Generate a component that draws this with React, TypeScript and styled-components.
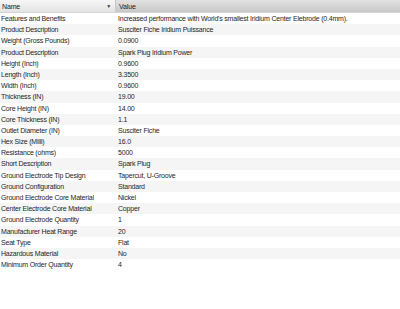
import React from 'react';
import styled, { createGlobalStyle } from 'styled-components';

const rows: [string, string][] = [
  ['Features and Benefits', "Increased performance with World's smallest Iridium Center Elebrode (0.4mm)."],
  ['Product Description', 'Susciter Fiche Iridium Puissance'],
  ['Weight (Gross Pounds)', '0.0900'],
  ['Product Description', 'Spark Plug Iridium Power'],
  ['Height (Inch)', '0.9600'],
  ['Length (Inch)', '3.3500'],
  ['Width (Inch)', '0.9600'],
  ['Thickness (IN)', '19.00'],
  ['Core Height (IN)', '14.00'],
  ['Core Thickness (IN)', '1.1'],
  ['Outlet Diameter (IN)', 'Susciter Fiche'],
  ['Hex Size (Milli)', '16.0'],
  ['Resistance (ohms)', '5000'],
  ['Short Description', 'Spark Plug'],
  ['Ground Electrode Tip Design', 'Tapercut, U-Groove'],
  ['Ground Configuration', 'Standard'],
  ['Ground Electrode Core Material', 'Nickel'],
  ['Center Electrode Core Material', 'Copper'],
  ['Ground Electrode Quantity', '1'],
  ['Manufacturer Heat Range', '20'],
  ['Seat Type', 'Flat'],
  ['Hazardous Material', 'No'],
  ['Minimum Order Quantity', '4'],
];

const Global = createGlobalStyle`
  html, body { margin: 0; padding: 0; background: #fff; }
  body { font-family: "Liberation Sans", Arial, sans-serif; }
`;

// property grid: name column + value column
const Grid = styled.div`
  width: 400px;
  display: grid;
  grid-template-columns: 116px 1fr;
`;

const HeadCell = styled.div<{ $sorted?: boolean }>`
  height: 13px;
  box-sizing: border-box;
  display: flex;
  align-items: center;
  padding: 0 2px 0 ${(p) => (p.$sorted ? 3 : 2)}px;
  font-size: 7px;
  letter-spacing: -0.15px;
  color: #1a1a1a;
  border-bottom: 1px solid #d6d6d6;
  border-right: ${(p) => (p.$sorted ? 'none' : '1px solid #c8c8c8')};
  background: ${(p) =>
    p.$sorted
      ? 'linear-gradient(#e2e2e2, #c8c8c8)'
      : 'linear-gradient(#f7f7f7, #e3e3e3)'};
`;

const Label = styled.span`
  flex: 1;
`;

const Arrow = styled.span`
  font-size: 5px;
  color: #333;
  margin-right: 2px;
`;

const Cell = styled.div<{ $alt: boolean; $value?: boolean }>`
  height: 11.2px;
  line-height: 11.2px;
  padding: 0 2px 0 ${(p) => (p.$value ? 2 : 1)}px;
  font-size: 7px;
  letter-spacing: -0.2px;
  color: #1e1e1e;
  white-space: nowrap;
  overflow: hidden;
  background: ${(p) => (p.$alt ? '#f5f5f5' : '#fff')};
`;

export default function App() {
  return (
    <>
      <Global />
      <Grid>
        <HeadCell>
          <Label>Name</Label>
          <Arrow>▼</Arrow>
        </HeadCell>
        <HeadCell $sorted>
          <Label>Value</Label>
        </HeadCell>
        {rows.map(([name, value], i) => (
          <React.Fragment key={i}>
            <Cell $alt={i % 2 === 1}>{name}</Cell>
            <Cell $alt={i % 2 === 1} $value>
              {value}
            </Cell>
          </React.Fragment>
        ))}
      </Grid>
    </>
  );
}
